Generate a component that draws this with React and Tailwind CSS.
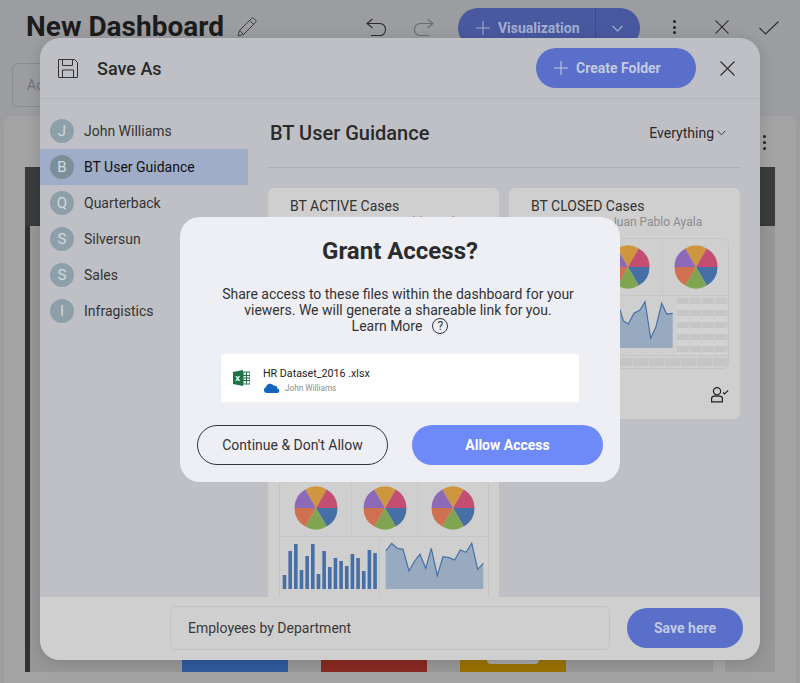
import React from 'react';

const pieColors = ["#cf9640", "#c44d72", "#4670a5", "#7fa551", "#cf7050", "#8c6ab8"];

const Pie = () => {
    const slices = pieColors.map((color, i) => {
        const a0 = ((i * 60 - 30 - 90) * Math.PI) / 180;
        const a1 = (((i + 1) * 60 - 30 - 90) * Math.PI) / 180;
        const d = `M22 22L${22 + 21.5 * Math.cos(a0)} ${22 + 21.5 * Math.sin(a0)}A21.5 21.5 0 0 1 ${22 + 21.5 * Math.cos(a1)} ${22 + 21.5 * Math.sin(a1)}Z`;
        return <path key={color} d={d} fill={color} />;
    });
    return <svg width="44" height="44" viewBox="0 0 44 44">{slices}</svg>;
};

const barHeights = [14, 38, 45, 19, 33, 45, 15, 38, 22, 31, 28, 23, 35, 31, 18, 39, 36];

const BarChart = () => (
    <svg width="100" height="57" viewBox="0 0 100 57">
        {barHeights.map((h, i) => (
            <rect key={i} x={2.7 + i * 5.66} y={52 - h} width="3.6" height={h} fill="#4670a5" />
        ))}
    </svg>
);

const AreaBig = () => {
    const pts = "5.7,14 11.7,6.3 17.3,11.3 23,12.3 29,34 34.7,24 40,17.3 45.7,31.3 51.3,11.3 57.3,38.700 63,19.700 69,20.700 74.7,23 80.3,13 86,15.300 91.7,6.300 97.7,32.300 103.300,26.300";
    return (
        <svg width="108" height="57" viewBox="0 0 108 57">
            <polygon points={`${pts} 103.300,52 5.7,52`} fill="#98aabf" />
            <polyline points={pts} fill="none" stroke="#4670a5" strokeWidth="1.2" />
        </svg>
    );
};

const AreaSmall = () => {
    const pts = "6,30 40,20 70,26 100,14 103.300,24.700 108.300,28 114,17.300 120,14 125,5.700 130.700,42.300 136,30.700 141.700,7.300 146.700,18 152.700,17.300";
    return (
        <svg width="157" height="57" viewBox="0 0 157 57">
            <polygon points={`${pts} 152.700,52 6,52`} fill="#98aabf" />
            <polyline points={pts} fill="none" stroke="#4670a5" strokeWidth="1.2" />
        </svg>
    );
};

const Thumbnail = ({table}) => (
    <div className={`h-[131px] w-[210px] overflow-hidden rounded-md border border-[#c4c4c4] ${table ? "ml-[10px]" : "ml-[11px]"}`}>
        <div className={`grid h-[57px] border-b border-[#c6c6c6] ${table ? "grid-cols-[74px_69px_1fr]" : "grid-cols-[72px_66px_1fr]"}`}>
            <div className="flex items-center justify-center border-r border-[#c8c8c8]"><Pie /></div>
            <div className="flex items-center justify-center border-r border-[#c8c8c8]"><Pie /></div>
            <div className="flex items-center justify-center"><Pie /></div>
        </div>
        {!table && (
            <div className="flex h-[59px]">
                <div className="w-[100px] border-r border-[#c6c6c6]"><BarChart /></div>
                <AreaBig />
            </div>
        )}
        {table && (
            <div>
                <div className="flex h-[59px]">
                    <div className="w-[157px] shrink-0"><AreaSmall /></div>
                    <div className="grid flex-1 grid-cols-[repeat(5,11.5px)] grid-rows-[repeat(10,6px)] gap-x-[1px] overflow-hidden pt-[2px]">
                        {Array.from({length: 50}).map((_, i) => (
                            <div key={i} className={Math.floor(i / 5) % 2 === 0 ? "bg-[#c5c5c5]" : "bg-[#d3d3d3]"} />
                        ))}
                    </div>
                </div>
                <div className="grid h-[13px] grid-cols-13 gap-[1px] border-t border-[#c6c6c6] py-[2px]">
                    {Array.from({length: 13}).map((_, i) => (
                        <div key={i} className="bg-[#c5c5c5]" />
                    ))}
                </div>
            </div>
        )}
    </div>
);

const Card = ({title, date, table, owner}) => (
    <div className="h-[231px] rounded-md bg-[#cfcfcf]">
        <div className="h-[27px] pl-[22px] pt-[9px] text-[14px] leading-[18px] text-[#333]">{title}</div>
        <div className="mb-[9px] h-[14px] pl-[22px] text-[12px] leading-[14px] text-[#8d8d8d]">{date}</div>
        <Thumbnail table={table} />
        {owner && (
            <div className="flex justify-end pr-[11px] pt-[18px]">
                <svg width="19" height="16" viewBox="0 0 19 16" fill="none" stroke="#222" strokeWidth="1.2">
                    <circle cx="7" cy="4.200" r="3.600" />
                    <path d="M1.600 14.800v-3c0-1.500 1.200-2.700 2.700-2.700h5.400c1.500 0 2.700 1.200 2.700 2.700v3z" />
                    <path d="M13 5.500l1.500 1.500 3.700-3.700" />
                </svg>
            </div>
        )}
    </div>
);

const folders = [
    {letter: "J", name: "John Williams"},
    {letter: "B", name: "BT User Guidance", active: true},
    {letter: "Q", name: "Quarterback"},
    {letter: "S", name: "Silversun"},
    {letter: "S", name: "Sales"},
    {letter: "I", name: "Infragistics"},
];

const Plus = ({size, color}) => (
    <svg width={size} height={size} viewBox="0 0 14 14" stroke={color} strokeWidth="1" fill="none">
        <path d="M7 0v14M0 7h14" />
    </svg>
);

const Cross = ({size, color = "#2c2c2c"}) => (
    <svg width={size} height={size} viewBox="0 0 15 15" stroke={color} strokeWidth="1.1" fill="none">
        <path d="M.5.5l14 14M14.500.5l-14 14" />
    </svg>
);

const Background = () => (
    <div className="h-full w-full bg-[#9c9da1]">
        <div className="flex h-[56px] items-start pl-[26px] pt-[8px]">
            <h1 className="text-[28px] font-bold leading-[38px] text-[#1c1c1c]">New Dashboard</h1>
            <svg className="ml-[13px] mt-[9px]" width="20" height="20" viewBox="0 0 20 20" fill="none" stroke="#3e3e3e" strokeWidth="1">
                <path d="M1 19l1.600-5.600L14.600 1.400a1.600 1.600 0 0 1 2.200 0l1.800 1.800a1.600 1.600 0 0 1 0 2.200L6.600 17.400zM2.600 13.400l4 4M12.600 3.400l4 4" />
            </svg>
            <svg className="ml-[109px] mt-[10px]" width="21" height="18" viewBox="0 0 21 18" fill="none" stroke="#2c2c2c" strokeWidth="1.1">
                <path d="M6.500 1L1 5.500 6.500 10M1 5.500h13c3 0 5.500 2.500 5.500 6s-2.500 6-5.500 6H5" />
            </svg>
            <svg className="ml-[26px] mt-[10px]" width="21" height="18" viewBox="0 0 21 18" fill="none" stroke="#6a6b6f" strokeWidth="1.1">
                <path d="M14.500 1L20 5.500 14.500 10M20 5.500H7c-3 0-5.500 2.500-5.500 6s2.500 6 5.500 6h9" />
            </svg>
            <div className="ml-[24px] flex h-[40px] w-[182px] items-center rounded-[20px] bg-[#4859a0] text-[#a5aed0]">
                <div className="flex h-full w-[138px] items-center gap-[8px] border-r border-[#3c4a88] pl-[18px]">
                    <Plus size={14} color="#a5aed0" />
                    <span className="text-[14px] font-bold">Visualization</span>
                </div>
                <svg className="ml-[16px]" width="11" height="7" viewBox="0 0 11 7" fill="none" stroke="#a5aed0" strokeWidth="1.1">
                    <path d="M.5 1l5 5 5-5" />
                </svg>
            </div>
            <div className="ml-[33px] mt-[12px] flex flex-col gap-[2.500px]">
                <span className="h-[3px] w-[3px] rounded-full bg-[#222]" />
                <span className="h-[3px] w-[3px] rounded-full bg-[#222]" />
                <span className="h-[3px] w-[3px] rounded-full bg-[#222]" />
            </div>
            <div className="ml-[39px] mt-[12px]"><Cross size={14} /></div>
            <svg className="ml-[30px] mt-[13px]" width="20" height="14" viewBox="0 0 20 14" fill="none" stroke="#2c2c2c" strokeWidth="1.1">
                <path d="M.5 7l6 6L19.500.5" />
            </svg>
        </div>
        <div className="h-[60px] pl-[12px] pt-[7px]">
            <div className="flex h-[44px] w-[60px] items-center rounded-md border border-[#8b8c90] pl-[14px] text-[14px] text-[#727377]">Add</div>
        </div>
        <div className="mx-[4px] flex h-[567px] flex-col rounded-t-lg bg-[#a3a3a3] px-[21px] pb-[11px]">
            <div className="flex h-[51px] shrink-0 flex-col items-end gap-[3px] pr-[9px] pt-[19px]">
                <span className="h-[3px] w-[3px] rounded-full bg-[#222]" />
                <span className="h-[3px] w-[3px] rounded-full bg-[#222]" />
                <span className="h-[3px] w-[3px] rounded-full bg-[#222]" />
            </div>
            <div className="h-[59px] shrink-0 bg-[#3a3b3c]" />
            <div className="flex flex-1">
                <div className="w-[5px] bg-[#303132]" />
                <div className="flex w-[683px] items-end gap-[33px] rounded-tl-sm bg-[#979797] pl-[152px]">
                    <div className="h-[12px] w-[106px] bg-[#305a9c]" />
                    <div className="h-[12px] w-[106px] bg-[#872a22]" />
                    <div className="flex h-[12px] w-[106px] justify-center bg-[#997000]">
                        <div className="h-[4px] w-[52px] rounded-b-sm bg-[#a5a5a5]" />
                    </div>
                </div>
                <div className="ml-[12px] flex-1 bg-[#979797]" />
            </div>
        </div>
    </div>
);

const SaveAs = () => (
    <div className="absolute left-[40px] top-[38px] flex h-[622px] w-[720px] flex-col overflow-hidden rounded-[20px] bg-[#bfc0c5] shadow-[0_2px_14px_rgba(0,0,0,0.15)]">
        <div className="flex h-[61px] shrink-0 items-center border-b border-[#b3b4b9] pl-[18px] pr-[25px]">
            <svg width="20" height="19" viewBox="0 0 20 19" fill="none" stroke="#333" strokeWidth="1">
                <path d="M.5.5h16l3 3v15H.5zM4.500.5v6h10v-6M4.500 18.500v-7.500h11v7.500" />
            </svg>
            <span className="ml-[19px] text-[18px] font-medium text-[#2a2a2a]">Save As</span>
            <div className="ml-auto flex h-[40px] w-[160px] items-center gap-[8px] rounded-[20px] bg-[#5a6fc9] pl-[18px] text-[#c3cae2]">
                <Plus size={14} color="#c3cae2" />
                <span className="text-[14px] font-bold">Create Folder</span>
            </div>
            <div className="ml-[24px]"><Cross size={15} /></div>
        </div>
        <div className="flex min-h-0 flex-1">
            <div className="w-[208px] shrink-0 pt-[14px]">
                {folders.map((f, i) => (
                    <div key={i} className={`flex h-[36px] items-center pl-[10px] ${f.active ? "bg-[#a0adc9]" : ""}`}>
                        <span className={`flex h-[24px] w-[24px] items-center justify-center rounded-full text-[15px] text-[#d3d8da] ${f.active ? "bg-[#7c8f98]" : "bg-[#8d9fa8]"}`}>{f.letter}</span>
                        <span className={`ml-[10px] text-[14px] ${f.active ? "text-[#111]" : "text-[#333]"}`}>{f.name}</span>
                    </div>
                ))}
            </div>
            <div className="min-w-0 flex-1 overflow-hidden pl-[20px] pr-[20px]">
                <div className="flex h-[69px] items-center border-b border-[#aeafb3] pr-[14px]">
                    <span className="pl-[2px] text-[20px] font-medium text-[#2a2a2a]">BT User Guidance</span>
                    <span className="ml-auto text-[14px] text-[#2a2a2a]">Everything</span>
                    <svg className="ml-[3px]" width="9" height="6" viewBox="0 0 10 6" fill="none" stroke="#2a2a2a" strokeWidth="1">
                        <path d="M.5.5l4.500 4.500L9.500.5" />
                    </svg>
                </div>
                <div className="grid grid-cols-2 gap-[10px] pt-[20px]">
                    <Card title="BT ACTIVE Cases" date="Nov 18, 2016 - Juan Pablo Ayala" />
                    <Card title="BT CLOSED Cases" date="Nov 18, 2016 - Juan Pablo Ayala" table owner />
                    <Card />
                </div>
            </div>
        </div>
        <div className="flex h-[63px] shrink-0 items-center bg-[#cfcfcf] pb-[1px] pl-[130px] pr-[17px]">
            <div className="flex h-[44px] w-[440px] items-center rounded-md border border-[#c2c2c2] pl-[17px] text-[14px] text-[#3a3a3a]">Employees by Department</div>
            <div className="ml-[17px] flex h-[40px] w-[116px] items-center justify-center rounded-[20px] bg-[#5a6fc9] text-[14px] font-bold text-[#c3cae2]">Save here</div>
        </div>
    </div>
);

const GrantAccess = () => (
    <div className="absolute left-[180px] top-[217px] h-[265px] w-[440px] rounded-[20px] bg-[#eeeff5] px-[17px] pt-[20px] text-center">
        <h2 className="text-[24px] font-bold leading-[28px] text-[#2c2c2c]">Grant Access?</h2>
        <div className="mt-[21px] text-[14px] leading-[16px] text-[#333]">
            <p className="pr-[4px]">
                Share access to these files within the dashboard for your<br />
                viewers. We will generate a shareable link for you.
            </p>
            <p className="flex items-center justify-center gap-[10px]">Learn More
                <span className="inline-flex h-[16px] w-[16px] items-center justify-center rounded-full border border-[#333] text-[12px]">?</span>
            </p>
        </div>
        <div className="mx-[24px] mt-[20px] flex h-[48px] items-center bg-white pl-[12px] text-left">
            <svg width="17" height="16" viewBox="0 0 17 16">
                <rect x="6" y="2" width="11" height="12" fill="#fff" stroke="#1e7145" strokeWidth="1" />
                <path d="M10 2.500v11M13.500 2.500v11M6 5.500h11M6 8h11M6 10.500h11" stroke="#1e7145" strokeWidth="1" />
                <path d="M0 2l10-2v16L0 14z" fill="#1e7145" />
                <text x="2.200" y="11" fontSize="7.500" fontWeight="700" fill="#fff" fontFamily="Roboto, sans-serif">X</text>
            </svg>
            <div className="ml-[13px]">
                <div className="pt-[4px] text-[10.700px] leading-[14px] text-[#222]">HR Dataset_2016 .xlsx</div>
                <div className="mt-[1px] flex items-center">
                    <svg width="17" height="10" viewBox="0 0 17 10">
                        <path d="M3.500 10A3 3 0 0 1 2.800 4.200 4.300 4.300 0 0 1 10.600 2.600 3.500 3.500 0 0 1 14.500 5.500 2.300 2.300 0 0 1 14.500 10z" fill="#1565c0" />
                    </svg>
                    <span className="ml-[5px] text-[8.200px] leading-[12px] text-[#8c8c8c]">John Williams</span>
                </div>
            </div>
        </div>
        <div className="mt-[23px] flex justify-between">
            <div className="flex h-[40px] w-[191px] items-center justify-center rounded-[20px] border border-[#333] text-[14px] text-[#333]">Continue &amp; Don't Allow</div>
            <div className="flex h-[40px] w-[191px] items-center justify-center rounded-[20px] bg-[#6e89f8] text-[14px] font-bold text-white">Allow Access</div>
        </div>
    </div>
);

const App = () => (
    <div className="relative h-[683px] w-[800px] overflow-hidden font-['Roboto',sans-serif]">
        <Background />
        <SaveAs />
        <GrantAccess />
    </div>
);

export default App;
